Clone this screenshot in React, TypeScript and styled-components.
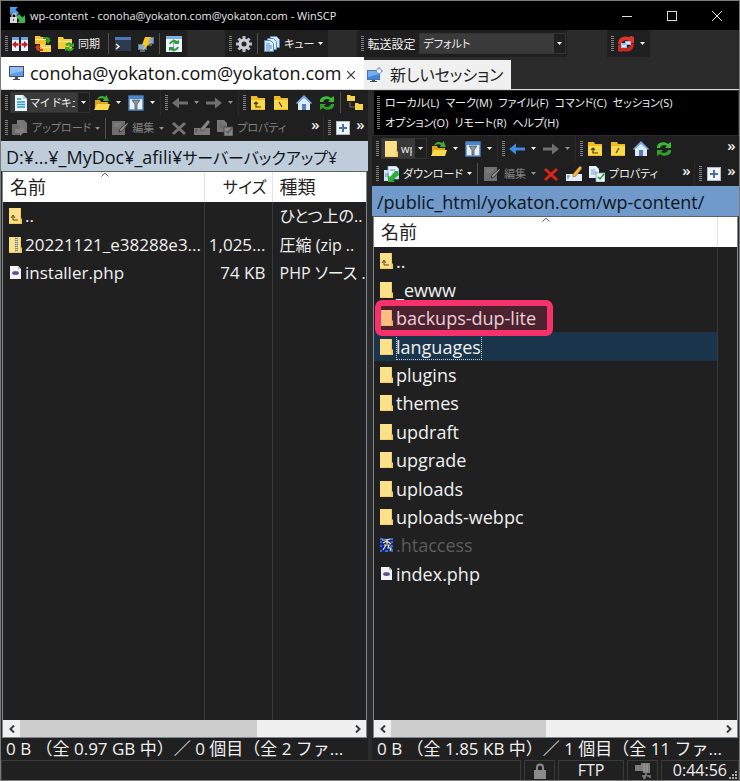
import React from "react";
import styled, { createGlobalStyle, css } from "styled-components";

const GlobalStyle = createGlobalStyle`
  * { box-sizing: border-box; }
  html, body { margin: 0; padding: 0; background: #202020; }
  body { font-family: "Open Sans", "Noto Sans CJK JP", sans-serif; color: #f0f0f0; }
  button, select { font: inherit; color: inherit; border: 0; background: none; padding: 0; margin: 0; }
  svg { display: block; flex: none; }
`;

const Window = styled.div`
  display: flex;
  flex-direction: column;
  height: 100vh;
  overflow: hidden;
  background: #2b2b2b;
  border: 1px solid #7a7a7a;
`;

/* ---------- title bar ---------- */
const TitleBar = styled.header`
  display: flex;
  align-items: center;
  flex: none;
  height: 29px;
  background: #000;
  padding-left: 8px;
`;
const Title = styled.h1`
  flex: 1;
  margin: 0 0 0 4px;
  font-size: 11px;
  font-weight: 400;
  white-space: nowrap;
  color: #e8e8e8;
`;
const CaptionButton = styled.button`
  display: flex;
  align-items: center;
  justify-content: center;
  width: 45px;
  height: 29px;
`;

/* ---------- toolbars ---------- */
const ToolRow = styled.div<{ $h: number }>`
  display: flex;
  flex: none;
  height: ${(p) => p.$h}px;
  overflow: hidden;
`;
const Band = styled.div<{ $grow?: boolean; $gap?: number; $tight?: boolean }>`
  display: flex;
  align-items: center;
  flex: ${(p) => (p.$grow ? "1 1 0" : "none")};
  min-width: 0;
  background: #1f1f1f;
  padding: 0 ${(p) => (p.$tight ? 1 : 2)}px 0 4px;
  margin-right: ${(p) => p.$gap ?? 1}px;
`;
const Grip = styled.span`
  flex: none;
  width: 3px;
  height: 16px;
  background: repeating-linear-gradient(#808080 0 1px, transparent 1px 2px);
`;
const Sep = styled.span<{ $m?: number }>`
  flex: none;
  width: 1px;
  height: 21px;
  margin: 0 ${(p) => p.$m ?? 2}px;
  background: #505050;
`;
const ToolButton = styled.button<{ $off?: boolean }>`
  display: flex;
  align-items: center;
  flex: none;
  min-width: 23px;
  height: 22px;
  padding: 0 1px 0 4px;
  font-size: 11px;
  line-height: 16px;
  white-space: nowrap;
  color: ${(p) => (p.$off ? "#808080" : "#f0f0f0")};
`;
const Caption = styled.span<{ $w?: number }>`
  margin-left: 4px;
  min-width: ${(p) => p.$w ?? 0}px;
  font-feature-settings: "palt";
  text-align: left;
`;
const DropButton = styled.button<{ $off?: boolean }>`
  display: flex;
  align-items: center;
  justify-content: center;
  flex: none;
  width: 11px;
  height: 22px;
  color: ${(p) => (p.$off ? "#909090" : "#f4f4f4")};
`;
const MoreButton = styled.button`
  flex: none;
  width: 13px;
  height: 22px;
  font-size: 15px;
  font-weight: 600;
  line-height: 14px;
  padding-bottom: 8px;
`;
const Spacer = styled.span`
  flex: 1 1 0;
`;
const Label = styled.label`
  margin: 0 2px 0 3px;
  font-size: 12px;
  white-space: nowrap;
`;
const Combo = styled.div<{ $w: number; $bare?: boolean }>`
  display: flex;
  align-items: center;
  flex: none;
  width: ${(p) => p.$w}px;
  height: 21px;
  margin-left: 2px;
  background: #3a3a3a;
  border: 1px solid #333;
  padding-left: ${(p) => (p.$bare ? 0 : 3)}px;
`;
const ComboSelect = styled.select`
  appearance: none;
  flex: 1 1 0;
  min-width: 0;
  width: 0;
  height: 19px;
  margin-left: 3px;
  overflow: hidden;
  white-space: nowrap;
  font-size: 11px;
  font-feature-settings: "palt";
  option { color: #f0f0f0; background: #3a3a3a; }
`;
const ComboArrow = styled.span`
  display: flex;
  align-items: center;
  justify-content: center;
  width: 11px;
  height: 19px;
  margin-left: 3px;
  background: #1f1f1f;
`;

/* ---------- session tabs ---------- */
const Tabs = styled.nav`
  display: flex;
  align-items: flex-end;
  flex: none;
  height: 33px;
  border-bottom: 1px solid #d8d8d8;
`;
const ActiveTab = styled.div`
  display: flex;
  align-items: center;
  height: 32px;
  width: 363px;
  padding: 0 6px 0 8px;
  background: #fff;
  color: #111;
`;
const TabButton = styled.button`
  display: flex;
  align-items: center;
  flex: 1 1 0;
  min-width: 0;
  gap: 5px;
  font-size: 18px;
  line-height: 24px;
  white-space: nowrap;
`;
const CloseTab = styled.button`
  display: flex;
  align-items: center;
  justify-content: center;
  width: 14px;
  height: 20px;
  padding-top: 3px;
`;
const NewTab = styled.button`
  display: flex;
  align-items: center;
  gap: 7px;
  height: 29px;
  width: 147px;
  padding-left: 3px;
  background: #f0f0f0;
  color: #222;
  font-size: 16px;
  line-height: 24px;
  white-space: nowrap;
  font-feature-settings: "palt";
`;

/* ---------- panes ---------- */
const Panes = styled.main`
  display: grid;
  grid-template-columns: minmax(0, 1fr) minmax(0, 1fr);
  gap: 4px;
  flex: 1 1 0;
  min-height: 0;
`;
const Pane = styled.section`
  display: flex;
  flex-direction: column;
  min-height: 0;
`;
const MenuBar = styled.div`
  display: flex;
  flex: none;
  align-items: center;
  height: 44px;
  margin: 1px 1px 1px 2px;
  padding-left: 3px;
  background: #000;
`;
const MenuItems = styled.div`
  display: flex;
  flex-wrap: wrap;
  gap: 0 6px;
  max-width: 310px;
  margin-left: 5px;
`;
const MenuGrip = styled(Grip)`
  height: 34px;
`;
const MenuItem = styled.button`
  height: 20px;
  font-size: 11px;
  line-height: 20px;
  white-space: nowrap;
  font-feature-settings: "palt";
`;
const PathBar = styled.div<{ $active?: boolean }>`
  flex: none;
  height: 30px;
  padding-left: 5px;
  font-size: 18px;
  line-height: 32px;
  white-space: nowrap;
  overflow: hidden;
  color: #10151c;
  background: ${(p) => (p.$active ? "#6f9aca" : "#bfcddb")};
  font-feature-settings: "palt";
`;
const Kana = styled.span`
  font-size: 16px;
`;
const ListBox = styled.div`
  display: flex;
  flex-direction: column;
  flex: 1 1 0;
  min-height: 0;
  margin: 0 1px;
  border: 1px solid #7d8790;
  border-top-color: #59636d;
  background: #202020;
`;
const FileTable = styled.table<{ $size: number }>`
  width: 100%;
  height: 100%;
  table-layout: fixed;
  border-collapse: collapse;
  font-size: ${(p) => p.$size}px;
`;
const TableArea = styled.div`
  flex: 1 1 0;
  min-height: 0;
  overflow: hidden;
`;
const Head = styled.th<{ $right?: boolean }>`
  position: relative;
  height: 30px;
  padding: 0 5px 0 7px;
  background: #fff;
  color: #222;
  font-size: ${(p) => (p.$right ? 16 : 18)}px;
  font-weight: 400;
  line-height: 28px;
  text-align: ${(p) => (p.$right ? "right" : "left")};
  border-right: 1px solid #e4e4e4;
  white-space: nowrap;
  font-feature-settings: "palt";
  &:last-child { border-right: 0; }
`;
const SortMark = styled.span`
  position: absolute;
  top: 0;
  left: 49%;
`;
const FileRow = styled.tr<{ $selected?: boolean; $dim?: boolean }>`
  height: 28px;
  color: ${(p) => (p.$dim ? "#5c5c5c" : "#f0f0f0")};
  &:nth-child(5n + 2), &:nth-child(5n + 4) { height: 29px; }
  ${(p) => p.$selected && css`
    td:first-child { background: #1a344b; }
  `}
`;
const FillRow = styled.tr``;
const Cell = styled.td<{ $right?: boolean; $first?: boolean }>`
  padding: 0 ${(p) => (p.$right ? 6 : 0)}px 0 ${(p) => (p.$first ? 6 : p.$right ? 0 : 7)}px;
  line-height: 24px;
  white-space: nowrap;
  overflow: hidden;
  text-align: ${(p) => (p.$right ? "right" : "left")};
  border-right: 1px solid #37393c;
  font-feature-settings: "palt";
  &:last-child { border-right: 0; }
`;
const TypeCell = styled(Cell)`
  font-size: 16px;
`;
const NameBox = styled.span`
  display: flex;
  align-items: center;
  gap: 3px;
`;
const NameText = styled.span<{ $focus?: boolean }>`
  outline: ${(p) => (p.$focus ? "1px dotted #c8c8c8" : "none")};
  outline-offset: -1px;
  padding: 1px 1px 1px 0;
`;
const ListFrame = styled.div`
  position: relative;
  display: flex;
  flex-direction: column;
  flex: 1 1 0;
  min-height: 0;
`;
const Highlight = styled.div`
  position: absolute;
  left: 3px;
  top: 84px;
  width: 178px;
  height: 36px;
  border: 6px solid #f7316c;
  border-radius: 7px;
  background: rgba(247, 49, 108, 0.2);
  pointer-events: none;
`;

/* ---------- scroll bar and status ---------- */
const ScrollBar = styled.div`
  display: flex;
  flex: none;
  height: 17px;
  background: #f0f0f0;
`;
const ScrollButton = styled.button`
  display: flex;
  align-items: center;
  justify-content: center;
  width: 17px;
  height: 17px;
`;
const ScrollTrack = styled.div`
  flex: 1 1 0;
`;
const ScrollThumb = styled.div<{ $size: number }>`
  width: ${(p) => p.$size}%;
  height: 17px;
  background: #cdcdcd;
`;
const PaneStatus = styled.div`
  flex: none;
  height: 22px;
  padding-left: 5px;
  font-size: 17px;
  line-height: 22px;
  white-space: nowrap;
  overflow: hidden;
  background: #202020;
`;
const StatusBar = styled.footer`
  display: flex;
  flex: none;
  gap: 3px;
  height: 20px;
  background: #202020;
`;
const StatusCell = styled.div<{ $w?: number }>`
  display: flex;
  align-items: center;
  justify-content: center;
  flex: ${(p) => (p.$w ? `0 0 ${p.$w}px` : "1 1 0")};
  border: 1px solid #3a3a3a;
  border-bottom: 0;
  font-size: 16px;
  line-height: 19px;
  white-space: nowrap;
`;
const ClockCell = styled(StatusCell)`
  justify-content: flex-end;
  align-items: flex-end;
  gap: 2px;
`;

/* ---------- drawings ---------- */
const Svg = ({ children, w = 16, h = 16 }: { children: React.ReactNode; w?: number; h?: number }) => (
  <svg width={w} height={h} viewBox={`0 0 ${w} ${h}`} aria-hidden="true">{children}</svg>
);
const Triangle = () => <Svg w={5} h={3}><path d="M0 0h5L2.5 3z" fill="currentColor" /></Svg>;

const AppIcon = () => (
  <Svg w={17} h={17}>
    <path d="M1 0h8L6.500 2.500 10 6 7 9 3.500 5.500 1 8z" fill="#4a9be8" />
    <path d="M16 16H8l2.500-2.500L7 10l3-3 3.500 3.500L16 8z" fill="#3fb549" />
    <path d="M3 10V8.500a2 2 0 0 1 4 0V10" fill="none" stroke="#c8ccd0" strokeWidth="1.300" />
    <rect x="1" y="10" width="7" height="6" fill="#d4d8dc" /><rect x="4" y="12" width="1" height="2" fill="#555" />
  </Svg>
);
const CompareIcon = () => (
  <Svg>
    <rect x="0" y="1" width="7" height="14" fill="#e8f0fa" /><rect x="9" y="1" width="7" height="14" fill="#e8f0fa" />
    <path d="M0 1h7v3H0zM9 1h7v3H9z" fill="#6aa2dc" />
    <path d="M0 8.500 4 5v2.300h2V9.700H4V12zM16 8.500 12 5v2.300h-2v2.400h2V12zM6.500 7.300h3v2.400h-3z" fill="#c81e1e" />
  </Svg>
);
const SyncFoldersIcon = () => (
  <Svg>
    <path d="M0 0h5l1 1h5v7H0z" fill="#f4c430" /><path d="M5 8h5l1 1h5v7H5z" fill="#f6d24a" /><path d="M0 3h11v1H0zM5 11h11v1H5z" fill="#fdeb9a" />
    <path d="M8 1h4c2 0 3 1 3 3h1l-3 4-3-4h2c0-1-1-1-1-1H8z" fill="#2ca02c" /><path d="M8 15H4c-2 0-3-1-3-3H0l3-4 3 4H4c0 1 1 1 1 1h3z" fill="#d43a22" />
  </Svg>
);
const SyncFolderIcon = () => (
  <Svg><path d="M0 1h5l1 2h8v10H0z" fill="#f6ce3c" /><path d="M0 5h14v1H0z" fill="#fdeb9a" />
    <path d="M7 9c2-3 5-3 7-1l2-1v4h-5l1-1c-1-1-2-1-3 0zM16 12c-2 4-5 4-7 2l-2 1v-4h5l-1 1c1 1 2 1 3 0z" fill="#3aa82e" /></Svg>
);
const TerminalIcon = () => (
  <Svg><rect width="16" height="14" y="1" fill="#2c3a4e" /><rect width="16" height="3" y="1" fill="#4a79b5" />
    <path d="M1 8l3 2.500L1 13" fill="none" stroke="#fff" strokeWidth="1.300" /></Svg>
);
const LightningIcon = () => (
  <Svg>
    <rect x="7.500" y="1.500" width="8" height="6" fill="#86a9cf" stroke="#5a7898" /><rect x=".5" y="8.500" width="8" height="5" fill="#86a9cf" stroke="#5a7898" /><path d="M2 15h5M10 9h4" stroke="#9aaabb" />
    <path d="M7 1h6L10 6h3L4 15l3-6H4z" fill="#f8c820" />
  </Svg>
);
const KeepSyncIcon = () => (
  <Svg>
    <rect width="16" height="16" fill="#eef4fb" /><rect width="16" height="3" fill="#7fb0e0" /><path d="M7.500 3v13" stroke="#9ab" />
    <path d="M3 8c1-4 6-5 8-3l2-1v4H8l1-1C8 6 6 6 5 8zM13 11c-1 4-6 5-8 3l-2 1v-4h5l-1 1c1 1 3 1 4-1z" fill="#2f9b3a" />
  </Svg>
);
const GearIcon = () => (
  <Svg>
    <g stroke="#b8c2cc" strokeWidth="3"><path d="M8 0v16M0 8h16M2.500 2.500l11 11M13.500 2.500l-11 11" /></g>
    <circle cx="8" cy="8" r="5.500" fill="#c8d0d8" /><circle cx="8" cy="8" r="2.500" fill="#252525" />
  </Svg>
);
const QueueIcon = () => (
  <Svg>
    <g fill="#d8ebfc" stroke="#5b8cc0"><path d="M6.500.5h6l3 3v8h-9z" /><path d="M3.500 2.500h6l3 3v8h-9z" /><path d="M.5 4.500h6l3 3v8h-9z" /></g>
    <path d="M2 8h4M2 10h6M2 12h6M2 14h4" stroke="#5b8cc0" />
  </Svg>
);
const TransferIcon = () => (
  <Svg>
    <path d="M0 8C0 2 5-1 11 1l2-1 3 1v6H9l2-2C7 3 4 5 3 9z" fill="#e03428" /><path d="M16 8c0 6-5 9-11 7l-2 1-3-1V9h7l-2 2c4 2 7 0 8-4z" fill="#c8281f" />
    <path d="M3 7h4V5h6v4H9v3H3z" fill="#94c0ea" /><path d="M4 9h4v2H4zM8 6h4v2H8z" fill="#d0e8ff" />
  </Svg>
);
const MonitorIcon = () => (
  <Svg><rect x=".5" y="1.500" width="14" height="10" fill="#5d9ce6" stroke="#3e5064" /><path d="M1 2h13v4L1 9z" fill="#93c0f4" /><path d="M6 12h3v2h2v1H4v-1h2z" fill="#3e5064" /></Svg>
);
const NewSessionIcon = () => (
  <Svg><rect x=".5" y="3.500" width="12" height="9" fill="#3f86e0" stroke="#4b73a8" /><path d="M1 4h11v3L1 10z" fill="#78aef0" /><path d="M5 13h3v1h2v1H3v-1h2z" fill="#42505e" />
    <circle cx="12" cy="4" r="2.500" fill="#fff" stroke="#6c96ca" /><path d="M12 0v2M12 6v2M8 4h2M14 4h2" stroke="#6c96ca" /></Svg>
);
const DocIcon = () => (
  <Svg w={13} h={16}><path d="M1 0h8l4 4v12H1z" fill="#eaf6fd" /><path d="M9 0v4h4" fill="#b8d8ea" /><path d="M3 4h4M3 7h8M3 9.500h8M3 12h8" stroke="#2f9bc4" strokeWidth="1.400" /></Svg>
);
const OpenFolderIcon = () => (
  <Svg><path d="M1 5h5l1 2h7v8H1z" fill="#dba51c" /><path d="M3 9h13l-2 6H0z" fill="#fbd94e" /><path d="M3 5c1-4 5-5 8-3l1.500-2L15 6H9l1-2C8 3 6 3 3 5z" fill="#3dae33" /></Svg>
);
const FilterIcon = () => (
  <Svg><rect x="1" y="1" width="14" height="14" fill="#e9eef5" stroke="#4a86cc" strokeWidth="1.400" /><path d="M1 1h14v3H1z" fill="#4a86cc" /><path d="M4 5h8L9 9v5H7V9z" fill="#8c98a6" stroke="#46525e" strokeWidth=".8" /></Svg>
);
const ArrowIcon = ({ right, color = "#6f6f6f" }: { right?: boolean; color?: string }) => (
  <Svg><path d={right ? "M16 8 9 2.500v4H0v3h9v4z" : "M0 8l7-5.500v4h9v3H7v4z"} fill={color} /></Svg>
);
const NavFolder = ({ mark }: { mark: string }) => (
  <Svg><path d="M1 1h6l1 2h7v12H1z" fill="#eebb22" /><path d="M1 5h14v9H1z" fill="#fbd94c" /><path d={mark} fill="none" stroke="#4b3910" strokeWidth="1.200" /></Svg>
);
const upMark = "M4 9l2-2 2 2M6 7v5h5";
const HomeIcon = () => (
  <Svg><path d="M2 7v8h12V7L8 2z" fill="#dceafa" /><path d="M0 8l8-8 8 8-1 1-7-6-7 6z" fill="#75a8e0" /><rect x="6" y="9" width="4" height="6" fill="#5a7dae" /></Svg>
);
const RefreshIcon = () => (
  <Svg><path d="M1 7V5c1-4 8-5 11-2l3-2v6H9l2-2C8 3 5 4 4 7z" fill="#3dbb35" /><path d="M15 9v2c-1 4-8 5-11 2l-3 2V9h6l-2 2c3 2 6 1 7-2z" fill="#2f9e2a" /></Svg>
);
const TreeIcon = () => (
  <Svg><path d="M3 7v5h6" fill="none" stroke="#777" /><path d="M0 0h3l1 1h4v5H0zM8 8h3l1 1h4v6H8z" fill="#f8d548" /></Svg>
);
const UploadIcon = () => (
  <Svg><path d="M5 0h7l3 3v10H5z" fill="#777" /><path d="M0 4h5l4 4v7H0z" fill="#6b6b6b" /><path d="M3 9h5V6l5 5-5 5v-3H3z" fill="#828282" /></Svg>
);
const DownloadIcon = () => (
  <Svg><path d="M1 4h8v11H1z" fill="#cfe5f8" /><path d="M5 0h8l3 3v10H5z" fill="#e9f4fd" stroke="#7ea8cc" strokeWidth=".8" /><path d="M2 8h4M2 10h4M7 4h5" stroke="#5b8cc0" /><path d="M15 5l1 4-6 5 2 2H5V9l2 2 5-6z" fill="#2fae35" /></Svg>
);
const EditIcon = () => (
  <Svg><path d="M0 1h13v14H0z" fill="#6f6f6f" /><path d="M16 2 8 9l-1 3 3-1 6-7z" fill="#999" stroke="#262626" strokeWidth=".8" /><path d="M2 4h7M2 6h5" stroke="#888" /></Svg>
);
const CrossIcon = ({ color }: { color: string }) => (
  <Svg><path d="M2 3l12 11M14 3 2 14" stroke={color} strokeWidth="3" /></Svg>
);
const RenameIcon = ({ off }: { off?: boolean }) => (
  <Svg><rect y="8" width="16" height="7" fill={off ? "#7a7a7a" : "#e6eefa"} /><path d="M2 10v3M1 10h3" stroke={off ? "#555" : "#4c83c6"} /><path d="M14 0 7 8v3l3-1 6-8z" fill={off ? "#8a8a8a" : "#f1b84a"} stroke={off ? "#444" : "#9a6a20"} strokeWidth=".6" /></Svg>
);
const PropsIcon = ({ off }: { off?: boolean }) => (
  <Svg><path d="M0 0h7l3 3v9H0z" fill={off ? "#777" : "#e5eefa"} /><path d="M2 4h4M2 6h6M2 8h5" stroke={off ? "#666" : "#7ba3d4"} /><rect x="7" y="7" width="9" height="9" fill={off ? "#888" : "#eff7ef"} stroke={off ? "#444" : "#6fa2cc"} strokeWidth=".8" /><path d="M9 11l2 2 4-5" fill="none" stroke={off ? "#5a5a5a" : "#28953a"} strokeWidth="1.500" /></Svg>
);
const PlusIcon = () => (
  <Svg><rect x="1.500" y="1.500" width="13" height="13" fill="#f2f6fb" stroke="#aebccb" /><path d="M8 4v8M4 8h8" stroke="#456fa6" strokeWidth="2" /></Svg>
);
const FolderFile = () => (
  <Svg w={13} h={16}><path d="M0 0h12v10l1 1v5H0z" fill="#f3cf66" /><path d="M0 0h11v15H0z" fill="#fde08a" /></Svg>
);
const UpFile = () => (
  <Svg w={13} h={16}><path d="M0 0h12v10l1 1v5H0z" fill="#f0c95c" /><path d="M0 0h11v15H0z" fill="#fde08a" /><path d="M2 10l2-3 2 3M4 8v4h5" fill="none" stroke="#5a4718" /></Svg>
);
const ZipFile = () => (
  <Svg w={13} h={16}><path d="M0 0h12v10l1 1v5H0z" fill="#f0c95c" /><path d="M0 0h11v15H0z" fill="#fde08a" /><path d="M6 0h3v15H6z" fill="#8a8a80" /><path d="M7.500 0v15" stroke="#e8e8e0" strokeDasharray="1 1" strokeWidth="2" /></Svg>
);
const PhpFile = () => (
  <Svg w={13} h={16}><path d="M1 1h8l3 3v10H1z" fill="#f4f4f8" /><path d="M9 1v3h3z" fill="#b8b8c4" /><ellipse cx="6.500" cy="8" rx="3.500" ry="2" fill="#75629e" /><path d="M4 8h5" stroke="#4f3e78" /></Svg>
);
const HtFile = () => (
  <Svg w={13} h={16}><rect y="1" width="13" height="14" fill="#10209c" /><path d="M2 3h5l3-1M7 2v5M3 6l4-2 4 3M4 8h5l-1 3h3l-1 3M6 8l-3 5" fill="none" stroke="#f4ee8a" strokeWidth="1.200" /><path d="M0 2h3M10 2h3M0 9h2M10 9h3M5 14h3M1 13v2M12 12v3M12 4v2M1 4v2" stroke="#58c8e8" /></Svg>
);
const LockIcon = () => (
  <Svg w={14} h={16}><path d="M4 7V4.500a3 3 0 0 1 6 0V7" fill="none" stroke="#888" strokeWidth="2" /><rect x="1" y="7" width="12" height="9" fill="#8b8b8b" /></Svg>
);
const CompressIcon = () => (
  <Svg><path d="M0 2h6V0h9v10H8V8H0z" fill="#7d7d7d" /><path d="M9 1v8M12 1v8" stroke="#a4a4a4" /><path d="M11 10v3M7 13h3v2H8M12 13h3v2" fill="none" stroke="#888" strokeWidth="1.500" /></Svg>
);
const SizeGrip = () => (
  <Svg w={9} h={9}><path d="M6 0h2v2H6zM3 3h2v2H3zM6 3h2v2H6zM0 6h2v2H0zM3 6h2v2H3zM6 6h2v2H6z" fill="#aaa" /></Svg>
);
const Chevron = ({ right }: { right?: boolean }) => (
  <Svg w={6} h={8}><path d={right ? "M1 0.500 4.500 4 1 7.500" : "M5 0.500 1.500 4 5 7.500"} fill="none" stroke="#3a3a3a" strokeWidth="2" /></Svg>
);

/* ---------- shared parts ---------- */
const Drop = ({ off, name }: { off?: boolean; name: string }) => (
  <DropButton $off={off} aria-label={name}><Triangle /></DropButton>
);
const More = () => <MoreButton aria-label="その他">»</MoreButton>;

const NavButtons = ({ rootMark }: { rootMark: string }) => (
  <>
    <ToolButton aria-label="上へ"><NavFolder mark={upMark} /></ToolButton>
    <ToolButton aria-label="ルート"><NavFolder mark={rootMark} /></ToolButton>
    <ToolButton aria-label="ホーム"><HomeIcon /></ToolButton>
    <ToolButton aria-label="更新"><RefreshIcon /></ToolButton>
  </>
);

const LocationBands = ({ icon, value, width, back }: { icon: React.ReactNode; value: string; width: number; back?: string }) => (
  <>
    <Band>
      <Grip />
      <Combo $w={width}>
        {icon}
        <ComboSelect aria-label="場所" defaultValue={value}><option>{value}</option></ComboSelect>
        <ComboArrow><Triangle /></ComboArrow>
      </Combo>
      <ToolButton aria-label="開く"><OpenFolderIcon /></ToolButton>
      <Drop name="開くメニュー" />
      <ToolButton aria-label="フィルタ"><FilterIcon /></ToolButton>
      <Drop name="フィルタメニュー" />
    </Band>
    <Band>
      <Grip />
      <ToolButton aria-label="戻る"><ArrowIcon color={back} /></ToolButton>
      <Drop name="戻る履歴" off={!back} />
      <ToolButton aria-label="進む"><ArrowIcon right /></ToolButton>
      <Drop name="進む履歴" off />
    </Band>
  </>
);

const FileBands = ({ label, icon, off }: { label: string; icon: React.ReactNode; off?: boolean }) => (
  <>
    <Band $grow $tight>
      <Grip />
      <ToolButton $off={off}>{icon}<Caption>{label}</Caption></ToolButton>
      <Drop name={`${label}メニュー`} off={off} />
      <Sep />
      <ToolButton $off><EditIcon /><Caption $w={23}>編集</Caption></ToolButton>
      <Drop name="編集メニュー" off />
      <ToolButton aria-label="削除"><CrossIcon color={off ? "#747474" : "#dc2418"} /></ToolButton>
      <ToolButton aria-label="名前の変更"><RenameIcon off={off} /></ToolButton>
      <ToolButton $off={off}><PropsIcon off={off} /><Caption>プロパティ</Caption></ToolButton>
      <Spacer />
      <More />
    </Band>
    <Band $tight $gap={0}>
      <Grip />
      <ToolButton aria-label="選択"><PlusIcon /></ToolButton>
      <More />
    </Band>
  </>
);

const Scroll = ({ size }: { size: number }) => (
  <ScrollBar>
    <ScrollButton aria-label="左へ"><Chevron /></ScrollButton>
    <ScrollTrack><ScrollThumb $size={size} /></ScrollTrack>
    <ScrollButton aria-label="右へ"><Chevron right /></ScrollButton>
  </ScrollBar>
);
const Sort = () => (
  <SortMark><Svg w={8} h={5}><path d="M.5 4.500 4 1l3.500 3.500" fill="none" stroke="#666" /></Svg></SortMark>
);

const localFiles = [
  { icon: <UpFile />, name: "..", size: "", type: "ひとつ上の.." },
  { icon: <ZipFile />, name: "20221121_e38288e3...", size: "1,025...", type: "圧縮 (zip .." },
  { icon: <PhpFile />, name: "installer.php", size: "74 KB", type: "PHP ソース ." },
];
const remoteFiles = [
  { icon: <UpFile />, name: ".." },
  ...["_ewww", "backups-dup-lite", "languages", "plugins", "themes", "updraft", "upgrade", "uploads", "uploads-webpc"].map(
    (name) => ({ icon: <FolderFile />, name })
  ),
  { icon: <HtFile />, name: ".htaccess" },
  { icon: <PhpFile />, name: "index.php" },
];
const menus = ["ローカル(L)", "マーク(M)", "ファイル(F)", "コマンド(C)", "セッション(S)", "オプション(O)", "リモート(R)", "ヘルプ(H)"];

export default function App() {
  return (
    <>
      <GlobalStyle />
      <Window>
        <TitleBar>
          <AppIcon />
          <Title>wp-content - conoha@yokaton.com@yokaton.com - WinSCP</Title>
          <CaptionButton aria-label="最小化"><Svg w={10} h={10}><path d="M0 5.500h10" stroke="#ddd" /></Svg></CaptionButton>
          <CaptionButton aria-label="最大化"><Svg w={10} h={10}><rect x=".5" y=".5" width="9" height="9" fill="none" stroke="#ddd" /></Svg></CaptionButton>
          <CaptionButton aria-label="閉じる"><Svg w={10} h={10}><path d="M0 0l10 10M10 0 0 10" stroke="#ddd" /></Svg></CaptionButton>
        </TitleBar>

        <ToolRow $h={27}>
          <Band $gap={38}>
            <Grip />
            <ToolButton aria-label="比較"><CompareIcon /></ToolButton>
            <ToolButton aria-label="ディレクトリの同期"><SyncFoldersIcon /></ToolButton>
            <ToolButton><SyncFolderIcon /><Caption $w={27}>同期</Caption></ToolButton>
            <Sep />
            <ToolButton aria-label="コンソール"><TerminalIcon /></ToolButton>
            <ToolButton aria-label="PuTTY"><LightningIcon /></ToolButton>
            <Sep />
            <ToolButton aria-label="同期ブラウズ"><KeepSyncIcon /></ToolButton>
          </Band>
          <Band $gap={29}>
            <Grip />
            <ToolButton aria-label="設定"><GearIcon /></ToolButton>
            <Sep />
            <ToolButton><QueueIcon /><Caption>キュー</Caption></ToolButton>
            <Drop name="キューメニュー" />
          </Band>
          <Band $gap={40} $tight>
            <Grip />
            <Label htmlFor="transfer">転送設定</Label>
            <Combo $w={147} $bare>
              <ComboSelect id="transfer" defaultValue="デフォルト"><option>デフォルト</option></ComboSelect>
              <ComboArrow><Triangle /></ComboArrow>
            </Combo>
          </Band>
          <Band>
            <Grip />
            <ToolButton aria-label="転送"><TransferIcon /></ToolButton>
            <Drop name="転送メニュー" />
          </Band>
        </ToolRow>

        <Tabs>
          <ActiveTab>
            <TabButton><MonitorIcon />conoha@yokaton.com@yokaton.com</TabButton>
            <CloseTab aria-label="タブを閉じる"><Svg w={8} h={8}><path d="M0 0l8 8M8 0 0 8" stroke="#333" strokeWidth="1.200" /></Svg></CloseTab>
          </ActiveTab>
          <NewTab><NewSessionIcon />新しいセッション</NewTab>
        </Tabs>

        <Panes>
          <Pane>
            <ToolRow $h={25}>
              <LocationBands icon={<DocIcon />} value="マイ ドキュメント" width={80} />
              <Band $grow $tight $gap={0}>
                <Grip />
                <NavButtons rootMark="M6 7l3 5" />
                <Sep />
                <ToolButton aria-label="ツリー"><TreeIcon /></ToolButton>
              </Band>
            </ToolRow>
            <ToolRow $h={26}><FileBands label="アップロード" icon={<UploadIcon />} off /></ToolRow>
            <PathBar>D:¥...¥_MyDoc¥_afili¥<Kana>サーバーバックアップ¥</Kana></PathBar>
            <ListBox>
              <TableArea>
                <FileTable $size={17}>
                  <colgroup><col /><col width="68" /><col width="94" /></colgroup>
                  <thead><tr><Head>名前<Sort /></Head><Head $right>サイズ</Head><Head>種類</Head></tr></thead>
                  <tbody>
                    {localFiles.map((f) => (
                      <FileRow key={f.name}>
                        <Cell $first><NameBox>{f.icon}<NameText>{f.name}</NameText></NameBox></Cell>
                        <Cell $right>{f.size}</Cell>
                        <TypeCell>{f.type}</TypeCell>
                      </FileRow>
                    ))}
                    <FillRow><Cell /><Cell /><Cell /></FillRow>
                  </tbody>
                </FileTable>
              </TableArea>
              <Scroll size={72} />
            </ListBox>
            <PaneStatus>0 B （全 0.97 GB 中）／ 0 個目（全 2 ファ...</PaneStatus>
          </Pane>

          <Pane>
            <MenuBar>
              <MenuGrip />
              <MenuItems>{menus.map((m) => <MenuItem key={m}>{m}</MenuItem>)}</MenuItems>
            </MenuBar>
            <ToolRow $h={25}>
              <LocationBands icon={<FolderFile />} value="wp-content" width={46} back="#3f8ae0" />
              <Band $grow $tight $gap={0}>
                <Grip />
                <NavButtons rootMark="M9 7l-3 5" />
                <Spacer />
                <More />
              </Band>
            </ToolRow>
            <ToolRow $h={25}><FileBands label="ダウンロード" icon={<DownloadIcon />} /></ToolRow>
            <PathBar $active>/public_html/yokaton.com/wp-content/</PathBar>
            <ListFrame>
              <ListBox>
                <TableArea>
                  <FileTable $size={18}>
                    <colgroup><col /><col width="20" /></colgroup>
                    <thead><tr><Head>名前<Sort /></Head><Head /></tr></thead>
                    <tbody>
                      {remoteFiles.map((f) => (
                        <FileRow key={f.name} $selected={f.name === "languages"} $dim={f.name === ".htaccess"}>
                          <Cell $first><NameBox>{f.icon}<NameText $focus={f.name === "languages"}>{f.name}</NameText></NameBox></Cell>
                          <Cell />
                        </FileRow>
                      ))}
                      <FillRow><Cell /><Cell /></FillRow>
                    </tbody>
                  </FileTable>
                </TableArea>
                <Scroll size={47} />
              </ListBox>
              <Highlight />
            </ListFrame>
            <PaneStatus>0 B （全 1.85 KB 中）／ 1 個目（全 11 ファ...</PaneStatus>
          </Pane>
        </Panes>

        <StatusBar>
          <StatusCell />
          <StatusCell $w={31}><LockIcon /></StatusCell>
          <StatusCell $w={66}>FTP</StatusCell>
          <StatusCell $w={31}><CompressIcon /></StatusCell>
          <ClockCell $w={78}>0:44:56<SizeGrip /></ClockCell>
        </StatusBar>
      </Window>
    </>
  );
}
